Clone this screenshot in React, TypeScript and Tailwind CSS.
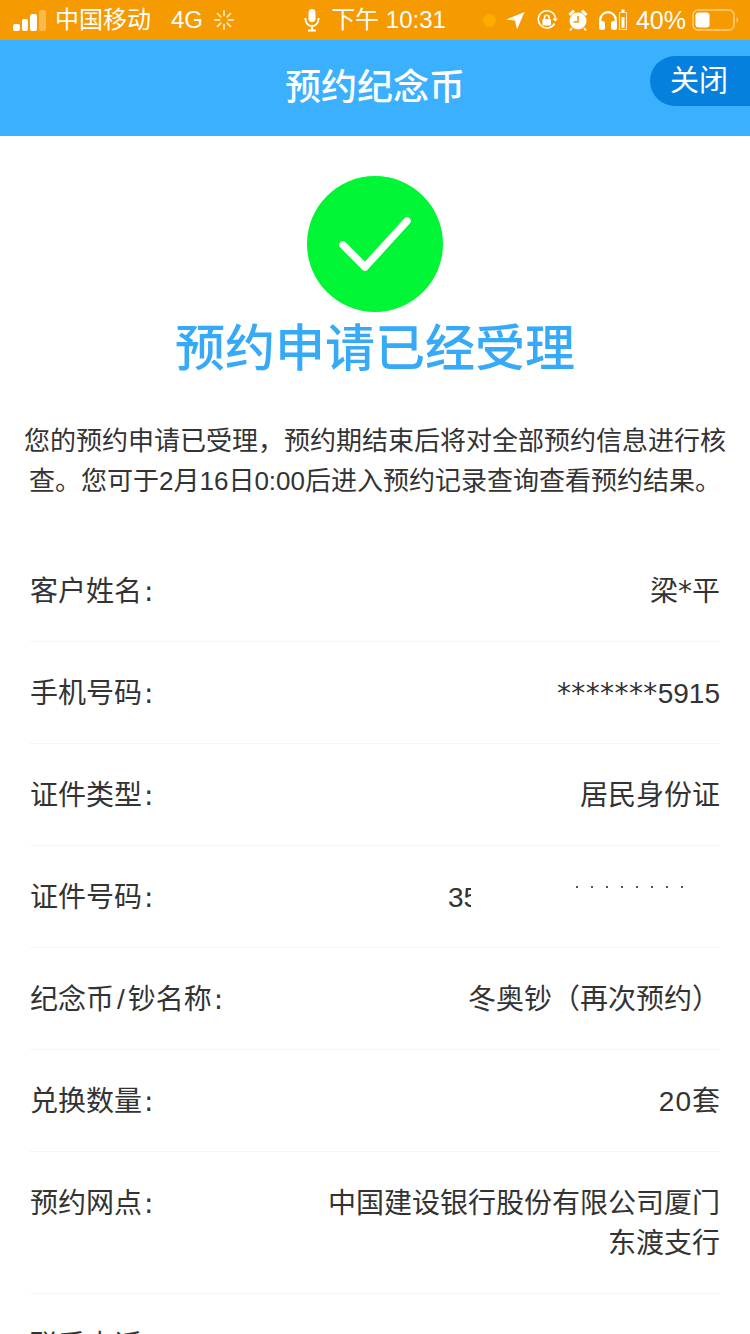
import type { ReactNode } from "react";

const rows: { label: ReactNode; value?: ReactNode; masked?: boolean }[] = [
  { label: "客户姓名", value: <>梁<span className="font-['DejaVu_Sans']">*</span>平</> },
  { label: "手机号码", value: <><span className="font-['DejaVu_Sans'] tracking-[0.4px]">*******</span>5915</> },
  { label: "证件类型", value: "居民身份证" },
  { label: "证件号码", masked: true },
  { label: <>纪念币<span className="px-[3px]">/</span>钞名称</>, value: "冬奥钞（再次预约）" },
  { label: "兑换数量", value: <><span className="tracking-[1px]">20</span>套</> },
  { label: "预约网点", value: "中国建设银行股份有限公司厦门东渡支行" },
];

const SignalIcon = () => (
  <svg width="36" height="26" viewBox="0 0 36 26">
    <rect x="0" y="17" width="7" height="7" rx="2" fill="#fff" />
    <rect x="9" y="12" width="6" height="12" rx="2" fill="#fff" />
    <rect x="17" y="7" width="7" height="17" rx="2" fill="#fff" />
    <rect x="26" y="3" width="7" height="21" rx="2" fill="#fff" opacity="0.3" />
  </svg>
);

const SpinnerIcon = () => (
  <svg width="20" height="20" viewBox="0 0 22 22" stroke="#ffe9b0" strokeWidth="2" strokeLinecap="round">
    <path d="M11 1v5M11 16v5M1 11h5M16 11h5M4 4l3.5 3.5M14.500 14.500L18 18M18 4l-3.500 3.500M7.500 14.500L4 18" />
  </svg>
);

const MicIcon = () => (
  <svg width="16" height="24" viewBox="0 0 16 24" fill="none" stroke="#fff" strokeWidth="1.800">
    <rect x="4.500" y="1" width="7" height="13" rx="3.500" fill="#fff" stroke="none" />
    <path d="M1.500 10v1.500a6.500 6.500 0 0 0 13 0V10M8 18v4M4 22.500h8" />
  </svg>
);

const LocationIcon = () => (
  <svg width="20" height="20" viewBox="0 0 20 20">
    <path d="M19.500 2L1 9.500L10 10.500L12 19.500z" fill="#fff" />
  </svg>
);

const RotationLockIcon = () => (
  <svg width="22" height="22" viewBox="0 0 22 22" fill="none">
    <path d="M18.500 14.500A8.600 8.600 0 1 1 19.500 9.500" stroke="#fff" strokeWidth="1.600" />
    <path d="M16.500 9.500h5.500l-2.700 3z" fill="#fff" />
    <rect x="6.500" y="10" width="8.500" height="6.500" rx="1" fill="#fff" />
    <path d="M8.500 10V8.500a2.300 2.300 0 0 1 4.600 0V10" stroke="#fff" strokeWidth="1.500" />
  </svg>
);

const AlarmIcon = () => (
  <svg width="20" height="22" viewBox="0 0 20 22" fill="none">
    <circle cx="10" cy="12" r="8.500" fill="#fff" />
    <path d="M10 7v6H5.500" stroke="#f59a00" strokeWidth="1.600" />
    <path d="M1.500 6L6 1.500M18.500 6L14 1.500" stroke="#fff" strokeWidth="3" />
    <path d="M4 19l-2 2.500M16 19l2 2.500" stroke="#fff" strokeWidth="1.600" />
  </svg>
);

const HeadphoneIcon = () => (
  <svg width="30" height="22" viewBox="0 0 30 22" fill="none">
    <path d="M2.200 15v-4a7.800 7.800 0 0 1 15.600 0v4" stroke="#fff" strokeWidth="2.200" />
    <rect x="1" y="12" width="6" height="9" rx="2.500" fill="#fff" />
    <rect x="13" y="12" width="6" height="9" rx="2.500" fill="#fff" />
    <rect x="21.500" y="3.500" width="7" height="17" fill="none" stroke="#ffe9c0" strokeWidth="1" />
    <rect x="23.500" y="0.500" width="3" height="2.500" fill="#fff" />
    <rect x="23.500" y="8" width="3" height="11" fill="#fff" />
  </svg>
);

const BatteryIcon = () => (
  <svg width="48" height="24" viewBox="0 0 48 24" fill="none">
    <rect x="1" y="2" width="41" height="20" rx="5" stroke="#fff" strokeOpacity="0.5" strokeWidth="1.500" />
    <rect x="3.500" y="4.500" width="14" height="15" rx="3" fill="#fff" />
    <path d="M44.500 9v6a3 3 0 0 0 1.800-3 3 3 0 0 0-1.800-3z" fill="#fff" fillOpacity="0.5" />
  </svg>
);

const StatusBar = () => (
  <div className="grid h-10 grid-cols-[1fr_auto_1fr] items-center bg-[#f59a00] text-white">
    <div className="flex items-center pl-[13px]">
      <SignalIcon />
      <span className="ml-[6px] text-[24px] leading-none">中国移动</span>
      <span className="ml-[20px] text-[24px] leading-none">4G</span>
      <span className="ml-[11px]">
        <SpinnerIcon />
      </span>
    </div>
    <div className="flex items-center">
      <MicIcon />
      <span className="ml-[11px] text-[24px] leading-none">下午 10:31</span>
    </div>
    <div className="flex items-center justify-end pr-[10px]">
      <span className="h-[13px] w-[13px] rounded-full bg-[#ffab00]" />
      <span className="ml-[9px]"><LocationIcon /></span>
      <span className="ml-[11px]"><RotationLockIcon /></span>
      <span className="ml-[10px]"><AlarmIcon /></span>
      <span className="ml-[10px]"><HeadphoneIcon /></span>
      <span className="ml-[8px] text-[25px] leading-none">40%</span>
      <span className="ml-[6px]"><BatteryIcon /></span>
    </div>
  </div>
);

const Header = () => (
  <div className="relative flex h-24 items-center justify-center bg-[#3bb0ff] text-white">
    <h1 className="text-[36px] leading-none font-medium">预约纪念币</h1>
    <button className="absolute top-4 right-0 flex h-[50px] w-[100px] items-center rounded-l-full bg-[#0680dd] pl-5 text-[29px] leading-none">
      关闭
    </button>
  </div>
);

const MaskedNumber = () => (
  <div className="relative h-10 w-[272px]">
    <span className="block w-[23px] overflow-hidden text-[28px] leading-10">35</span>
    <div className="absolute top-[8px] left-[128px] flex gap-[13px]">
      {[0, 1, 2, 3, 4, 5, 6, 7].map((i) => (
        <span key={i} className="h-[2px] w-[2px] bg-[#555]" />
      ))}
    </div>
  </div>
);

// only the very top of this number is still on screen
const PhoneTops = () => (
  <svg width="250" height="4" viewBox="0 0 250 4" className="mt-[7px]">
    {[17, 35, 68, 102, 118, 170, 198, 215].map((x) => (
      <rect key={x} x={x - 4} y="1" width="8" height="3" fill="#c4c4c4" />
    ))}
  </svg>
);

const Colon = () => <span className="ml-[2px] font-['DejaVu_Sans']">:</span>;

const App = () => {
  return (
    <div className="h-[1334px] w-[750px] overflow-hidden bg-white font-['Liberation_Sans','Noto_Sans_CJK_SC',sans-serif]">
      <StatusBar />
      <Header />
      <div className="flex flex-col items-center pt-10">
        <div className="flex h-[136px] w-[136px] items-center justify-center rounded-full bg-[#00f534]">
          <svg width="72" height="54" viewBox="0 0 72 54" fill="none">
            <path d="M4 28L26 50L68 4" stroke="#fff" strokeWidth="7.500" strokeLinecap="round" strokeLinejoin="round" />
          </svg>
        </div>
        <h2 className="mt-[8px] text-[50px] leading-[58px] font-medium text-[#36a9f7]">预约申请已经受理</h2>
      </div>
      <p className="mt-[43px] px-[22px] text-center text-[26px] leading-10 text-[#333]">
        您的预约申请已受理，预约期结束后将对全部预约信息进行核查。您可于2月16日0:00后进入预约记录查询查看预约结果。
      </p>
      <ul className="mt-[39px] px-[30px] text-[28px] leading-10 text-[#333]">
        {rows.map((row, i) => (
          <li key={i} className="flex justify-between border-b border-[#f5f5f5] pt-[32px] pb-[29px]">
            <span className="shrink-0">{row.label}<Colon /></span>
            {row.masked ? (
              <MaskedNumber />
            ) : (
              <span className="w-[392px] text-right">{row.value}</span>
            )}
          </li>
        ))}
        <li className="flex justify-between pt-[32px]">
          <span className="shrink-0">联系电话<Colon /></span>
          <PhoneTops />
        </li>
      </ul>
    </div>
  );
};

export default App;
